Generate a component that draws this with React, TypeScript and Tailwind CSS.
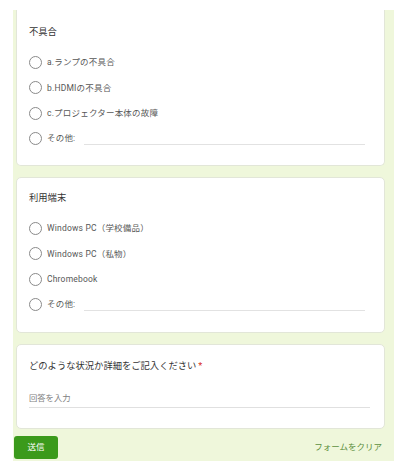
import React from 'react';

const font = { fontFamily: 'Roboto, "Noto Sans CJK JP", sans-serif' };

function Radio({ label, other }: { label: string; other?: boolean }) {
  return (
    <div className="flex items-center h-[25.3px]">
      <span className="w-[13px] h-[13px] rounded-full border-[1.4px] border-[#8a8a8a] shrink-0" />
      <span className="ml-[5px] text-[8.5px] text-[#575757] tracking-[0.2px] whitespace-nowrap">{label}</span>
      {other && <span className="ml-[9px] mr-[6px] flex-1 self-end mb-[6px] border-b border-[#e2e2e2]" />}
    </div>
  );
}

function ChoiceCard({ title, options, first }: { title: string; options: string[]; first?: boolean }) {
  return (
    <div
      className={
        first
          ? 'h-[156px] bg-white rounded-b-[5px] border-x border-b border-[#e2e6d8] pl-[12px] pr-[13px] pt-[15px]'
          : 'h-[156px] bg-white rounded-[5px] border border-[#e2e6d8] pl-[12px] pr-[13px] pt-[13px]'
      }
    >
      <div className="text-[9.3px] leading-[14px] text-[#333333]">{title}</div>
      <div className="mt-[11px] flex flex-col">
        {options.map((o) => (
          <Radio key={o} label={o} />
        ))}
        <Radio label="その他:" other />
      </div>
    </div>
  );
}

export default function App() {
  return (
    <div className="w-[400px] h-[468px] bg-white pt-[10px] pl-[13px]" style={font}>
      <div className="w-[381px] h-[451px] bg-[#eff7db] pl-[3px] pr-[9px] flex flex-col">
        <ChoiceCard first title="不具合" options={['a.ランプの不具合', 'b.HDMIの不具合', 'c.プロジェクター本体の故障']} />
        <div className="mt-[11px]">
          <ChoiceCard title="利用端末" options={['Windows PC（学校備品）', 'Windows PC（私物）', 'Chromebook']} />
        </div>
        <div className="mt-[11px] h-[85px] bg-white rounded-[5px] border border-[#e2e6d8] pl-[12px] pr-[14px] pt-[14px]">
          <div className="text-[9.3px] leading-[14px] text-[#333333]">
            どのような状況か詳細をご記入ください<span className="text-[#d93025] ml-[2px]">*</span>
          </div>
          <div className="mt-[19px] text-[8.3px] leading-[12px] text-[#808080] pb-[3px] border-b border-[#e0e0e0]">回答を入力</div>
        </div>
        <div className="mt-[7px] flex items-center justify-between">
          <button className="w-[44px] h-[23px] ml-[-2px] rounded-[3px] bg-[#3b9a1b] text-white text-[8.5px]">送信</button>
          <span className="mr-[3px] text-[8.5px] text-[#5d9040]">フォームをクリア</span>
        </div>
      </div>
    </div>
  );
}
